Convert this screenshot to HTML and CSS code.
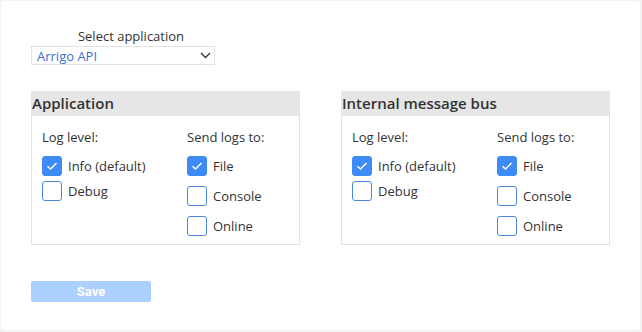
FILE: index.html
```html
<!DOCTYPE html>
<html>
<head>
<meta charset="utf-8">
<link rel="stylesheet" href="styles.css">
</head>
<body>
<div class="card">
  <div class="selector">
    <div class="sel-label">Select application</div>
    <div class="select">
      <span class="sel-value">Arrigo API</span>
      <svg class="chev" width="11" height="7" viewBox="0 0 11 7"><path d="M1 1 L5.5 5.5 L10 1" fill="none" stroke="#333" stroke-width="1.3"/></svg>
    </div>
  </div>
  <div class="panels">
    <div class="panel">
      <div class="panel-head">Application</div>
      <div class="panel-body">
        <div class="col col-left">
          <div class="col-title">Log level:</div>
          <label class="opt"><span class="box on"><svg width="20" height="20" viewBox="0 0 20 20"><path d="M5.5 10.2 L8.5 13 L14.5 7" fill="none" stroke="#fff" stroke-width="1.5"/></svg></span>Info (default)</label>
          <label class="opt"><span class="box"></span>Debug</label>
        </div>
        <div class="col col-right">
          <div class="col-title">Send logs to:</div>
          <label class="opt"><span class="box on"><svg width="20" height="20" viewBox="0 0 20 20"><path d="M5.5 10.2 L8.5 13 L14.5 7" fill="none" stroke="#fff" stroke-width="1.5"/></svg></span>File</label>
          <label class="opt"><span class="box"></span>Console</label>
          <label class="opt"><span class="box"></span>Online</label>
        </div>
      </div>
    </div>
    <div class="panel">
      <div class="panel-head">Internal message bus</div>
      <div class="panel-body">
        <div class="col col-left">
          <div class="col-title">Log level:</div>
          <label class="opt"><span class="box on"><svg width="20" height="20" viewBox="0 0 20 20"><path d="M5.5 10.2 L8.5 13 L14.5 7" fill="none" stroke="#fff" stroke-width="1.5"/></svg></span>Info (default)</label>
          <label class="opt"><span class="box"></span>Debug</label>
        </div>
        <div class="col col-right">
          <div class="col-title">Send logs to:</div>
          <label class="opt"><span class="box on"><svg width="20" height="20" viewBox="0 0 20 20"><path d="M5.5 10.2 L8.5 13 L14.5 7" fill="none" stroke="#fff" stroke-width="1.5"/></svg></span>File</label>
          <label class="opt"><span class="box"></span>Console</label>
          <label class="opt"><span class="box"></span>Online</label>
        </div>
      </div>
    </div>
  </div>
  <button class="save">Save</button>
</div>
</body>
</html>
```
FILE: styles.css
```css
html, body {
  margin: 0;
  padding: 0;
  background: #f3f3f3;
}
body {
  padding: 1px 2px 2px 1px;
  font-family: "Open Sans", "Noto Sans", sans-serif;
  color: #333;
}
.card {
  background: #fff;
  border-radius: 4px;
  height: 329px;
  box-sizing: border-box;
  padding: 27px 0 0 30px;
}
.selector {
  width: 184px;
}
.sel-label {
  text-align: center;
  font-size: 13px;
  line-height: 16px;
  height: 18px;
  padding-left: 16px;
}
.select {
  height: 19px;
  border: 1px solid #e2e2e2;
  box-sizing: border-box;
  display: flex;
  align-items: center;
  justify-content: space-between;
  padding: 0 3px 0 5px;
}
.sel-value {
  color: #3d6fd6;
  font-size: 13px;
  line-height: 16px;
}
.chev {
  display: block;
}
.panels {
  display: flex;
  gap: 41px;
  margin-top: 26px;
}
.panel {
  width: 269px;
}
.panel-head {
  background: #e6e6e6;
  height: 25px;
  font-size: 15px;
  font-weight: 600;
  line-height: 25px;
  padding-left: 1px;
  color: #333;
}
.panel-body {
  border: 1px solid #e2e2e2;
  border-top: none;
  height: 129px;
  box-sizing: border-box;
  display: flex;
  padding: 12px 0 0 10px;
}
.col {
  display: flex;
  flex-direction: column;
}
.col-left {
  width: 145px;
  gap: 5px;
}
.col-right {
  gap: 10px;
}
.col-title {
  font-size: 13px;
  line-height: 18px;
  height: 18px;
}
.col-left .col-title {
  margin-bottom: 5px;
}
.col-right .col-title {
  margin-bottom: 0;
}
.opt {
  display: flex;
  align-items: center;
  gap: 6px;
  font-size: 13px;
  height: 20px;
  color: #333;
}
.box {
  width: 20px;
  height: 20px;
  box-sizing: border-box;
  border: 1px solid #4a86e0;
  border-radius: 3px;
  display: block;
  flex: none;
}
.box.on {
  background: #3c8bf6;
  border-color: #3c8bf6;
}
.box svg {
  display: block;
  margin: -1px;
}
.save {
  display: block;
  margin-top: 36px;
  width: 120px;
  height: 21px;
  border: none;
  border-radius: 2px;
  background: #acd0ff;
  color: #fff;
  font-family: "Liberation Sans Narrow", "Roboto", sans-serif;
  font-weight: bold;
  font-size: 13px;
  padding: 0;
}
```
